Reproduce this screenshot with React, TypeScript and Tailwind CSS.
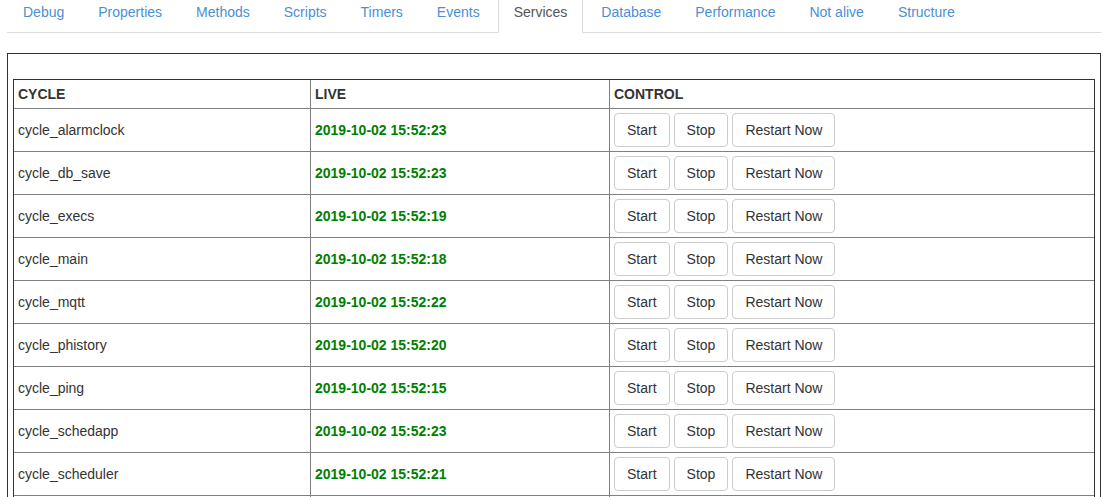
import React from "react";

const tabs = [
  "Debug",
  "Properties",
  "Methods",
  "Scripts",
  "Timers",
  "Events",
  "Services",
  "Database",
  "Performance",
  "Not alive",
  "Structure",
];

const rows: [string, string][] = [
  ["cycle_alarmclock", "2019-10-02 15:52:23"],
  ["cycle_db_save", "2019-10-02 15:52:23"],
  ["cycle_execs", "2019-10-02 15:52:19"],
  ["cycle_main", "2019-10-02 15:52:18"],
  ["cycle_mqtt", "2019-10-02 15:52:22"],
  ["cycle_phistory", "2019-10-02 15:52:20"],
  ["cycle_ping", "2019-10-02 15:52:15"],
  ["cycle_schedapp", "2019-10-02 15:52:23"],
  ["cycle_scheduler", "2019-10-02 15:52:21"],
];

function Btn({ children }: { children: React.ReactNode }) {
  return (
    <button className="rounded-[4px] border border-[#ccc] bg-white px-[12px] py-[6px] text-[14px] leading-[20px] text-[#333]">
      {children}
    </button>
  );
}

export default function App() {
  return (
    <div
      className="h-[497px] overflow-hidden bg-white pl-[7px] pr-[2px] text-[14px] leading-[20px] text-[#333]"
      style={{ fontFamily: '"Liberation Sans", Arial, sans-serif' }}
    >
      <ul className="-mt-[9px] flex border-b border-[#ddd]">
        {tabs.map((t) => {
          const active = t === "Services";
          return (
            <li key={t} className="-mb-px mr-[2px]">
              <a
                className={
                  active
                    ? "block rounded-t-[4px] border border-[#ddd] border-b-white bg-white px-[15px] py-[10px] leading-[20px] text-[#555]"
                    : "block rounded-t-[4px] border border-transparent px-[15px] py-[10px] leading-[20px] text-[#4a8fd6]"
                }
              >
                {t}
              </a>
            </li>
          );
        })}
      </ul>

      <div className="mt-[20px] border border-[#333] px-[5px] pt-[25px] pb-[5px]">
        <div className="border border-[#333]">
          <table className="w-full table-fixed border-separate border-spacing-0">
            <thead>
              <tr>
                <th className="w-[296px] p-[4px] text-left font-bold uppercase">Cycle</th>
                <th className="w-[299px] border-l border-[#808080] p-[4px] text-left font-bold uppercase">Live</th>
                <th className="border-l border-[#808080] p-[4px] text-left font-bold uppercase">Control</th>
              </tr>
            </thead>
            <tbody>
              {rows.map(([name, time]) => (
                <tr key={name}>
                  <td className="border-t border-[#808080] p-[4px] align-middle">{name}</td>
                  <td className="border-l border-t border-[#808080] p-[4px] align-middle font-bold text-[#008000]">
                    {time}
                  </td>
                  <td className="border-l border-t border-[#808080] p-[4px] align-middle">
                    <div className="flex gap-[4px]">
                      <Btn>Start</Btn>
                      <Btn>Stop</Btn>
                      <Btn>Restart Now</Btn>
                    </div>
                  </td>
                </tr>
              ))}
              <tr>
                <td className="h-[43px] border-t border-[#808080] p-[4px]"></td>
                <td className="h-[43px] border-l border-t border-[#808080] p-[4px]"></td>
                <td className="h-[43px] border-l border-t border-[#808080] p-[4px]"></td>
              </tr>
            </tbody>
          </table>
        </div>
      </div>
    </div>
  );
}
